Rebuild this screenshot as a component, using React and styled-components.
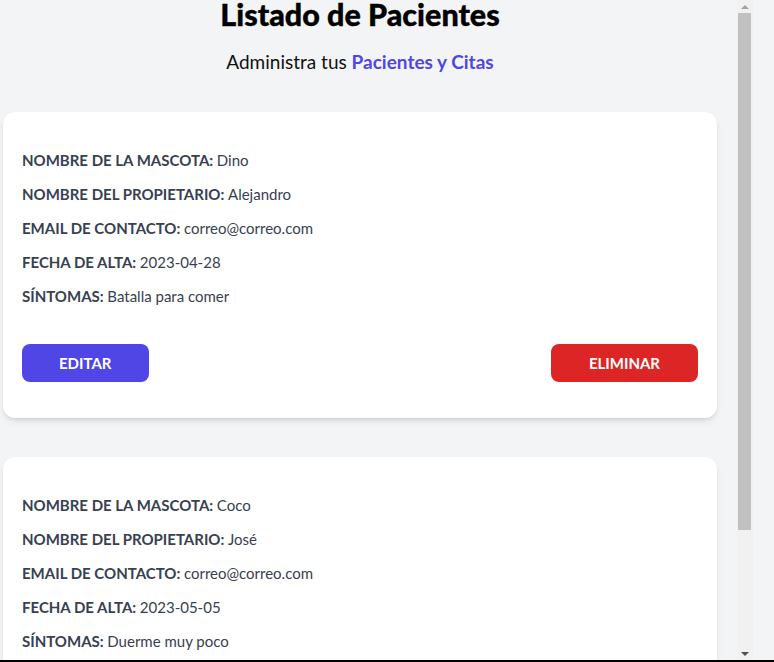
import * as React from "react"
import styled, { createGlobalStyle } from "styled-components"

const GlobalStyle = createGlobalStyle`
  html, body {
    margin: 0;
    padding: 0;
    background-color: #f3f4f6;
    font-family: "Lato", "Open Sans", sans-serif;
  }
`

// **** Styled Components ****
const Frame = styled.div`
  display: flex;
  height: 660px;
  border-bottom: 2px solid #000;
  overflow: hidden;
  background-color: #f3f4f6;
`

const ListPanel = styled.section`
  flex: 0 0 737px;
  padding-right: 17px;
  box-sizing: border-box;
  overflow: hidden;
`

const Title = styled.h2`
  margin: 0;
  font-family: "Lato", sans-serif;
  font-weight: 900;
  font-size: 30.5px;
  line-height: 28px;
  text-align: center;
  color: #000;
  -webkit-text-stroke: 0.4px #000;
`

const Subtitle = styled.p`
  margin: 22px 0 0;
  font-size: 19px;
  line-height: 24px;
  text-align: center;
  color: #111;

  span {
    color: #4f46e5;
    font-weight: 700;
  }
`

const Card = styled.div`
  margin: ${props => (props.first ? "38px" : "39px")} 3px 0;
  padding: 37px 19px 36px;
  background-color: #fff;
  border-radius: 12px;
  box-shadow: 0 4px 6px -1px rgba(0, 0, 0, 0.1), 0 2px 4px -2px rgba(0, 0, 0, 0.1);
`

const Field = styled.p`
  margin: 0 0 12px;
  font-size: 15px;
  line-height: 22px;
  color: #374151;
  text-transform: uppercase;
  font-weight: 700;

  span {
    font-weight: 400;
    text-transform: none;
  }
`

const Actions = styled.div`
  display: flex;
  justify-content: space-between;
  margin-top: 37px;
`

const Button = styled.button`
  height: 38px;
  padding: 0 ${props => (props.danger ? "38px" : "37px")};
  border: none;
  border-radius: 8px;
  background-color: ${props => (props.danger ? "#dc2626" : "#4f46e5")};
  color: #fff;
  font-family: "Lato", sans-serif;
  font-weight: 700;
  font-size: 15px;
  text-transform: uppercase;
  cursor: pointer;
`

const ScrollTrack = styled.div`
  flex: 0 0 16px;
  display: flex;
  flex-direction: column;
  align-items: center;
  background-color: #f1f1f1;
`

const Arrow = styled.div`
  flex: 0 0 13px;
  display: flex;
  align-items: center;
  justify-content: center;

  &::before {
    content: "";
    border-left: 4px solid transparent;
    border-right: 4px solid transparent;
    ${props =>
      props.down
        ? "border-top: 4px solid #505050;"
        : "border-bottom: 4px solid #a3a3a3;"}
  }
`

const Thumb = styled.div`
  width: 13px;
  height: 517px;
  margin-left: 1px;
  align-self: flex-start;
  background-color: #c1c1c1;
`

const TrackRest = styled.div`
  flex: 1;
`

const RightGutter = styled.div`
  flex: 1;
  background-color: #f3f4f6;
`

const pacientes = [
  {
    id: 1,
    mascota: "Dino",
    propietario: "Alejandro",
    email: "correo@correo.com",
    fecha: "2023-04-28",
    sintomas: "Batalla para comer"
  },
  {
    id: 2,
    mascota: "Coco",
    propietario: "José",
    email: "correo@correo.com",
    fecha: "2023-05-05",
    sintomas: "Duerme muy poco"
  }
]

const Paciente = ({ paciente, first }) => (
  <Card first={first}>
    <Field>
      Nombre de la mascota: <span>{paciente.mascota}</span>
    </Field>
    <Field>
      Nombre del propietario: <span>{paciente.propietario}</span>
    </Field>
    <Field>
      Email de contacto: <span>{paciente.email}</span>
    </Field>
    <Field>
      Fecha de alta: <span>{paciente.fecha}</span>
    </Field>
    <Field>
      Síntomas: <span>{paciente.sintomas}</span>
    </Field>
    <Actions>
      <Button type="button">Editar</Button>
      <Button type="button" danger>
        Eliminar
      </Button>
    </Actions>
  </Card>
)

const App = () => {
  return (
    <>
      <GlobalStyle />
      <Frame>
        <ListPanel>
          <Title>Listado de Pacientes</Title>
          <Subtitle>
            Administra tus <span>Pacientes y Citas</span>
          </Subtitle>
          {pacientes.map((p, i) => (
            <Paciente key={p.id} paciente={p} first={i === 0} />
          ))}
        </ListPanel>
        <ScrollTrack>
          <Arrow />
          <Thumb />
          <TrackRest />
          <Arrow down />
        </ScrollTrack>
        <RightGutter />
      </Frame>
    </>
  )
}

export default App
